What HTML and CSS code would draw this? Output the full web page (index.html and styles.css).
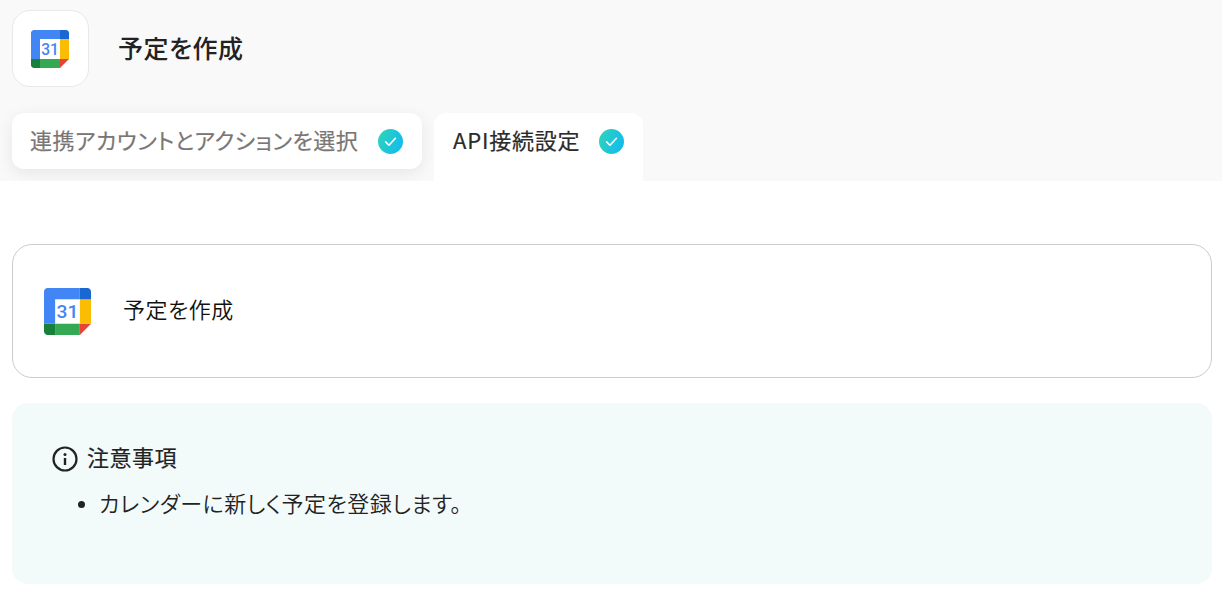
FILE: index.html
```html
<!DOCTYPE html>
<html lang="ja">
<head>
<meta charset="utf-8">
<title>予定を作成</title>
<link rel="stylesheet" href="styles.css">
</head>
<body>
<svg class="defs" width="0" height="0" aria-hidden="true">
  <defs>
    <linearGradient id="check-grad" x1="0" y1="0.3" x2="1" y2="0.7">
      <stop offset="0" stop-color="#2dd3bb"/>
      <stop offset="1" stop-color="#12bbf0"/>
    </linearGradient>
    <symbol id="gcal" viewBox="0 0 200 200">
      <path fill="#fff" d="M152.637 47.363H47.363v105.274h105.274z"/>
      <path fill="#EA4335" d="M152.637 200L200 152.637h-47.363z"/>
      <path fill="#FBBC04" d="M200 47.363h-47.363v105.273H200z"/>
      <path fill="#34A853" d="M152.637 152.637H47.363V200h105.273z"/>
      <path fill="#188038" d="M0 152.637v31.576C0 192.936 7.064 200 15.788 200h31.576v-47.363z"/>
      <path fill="#1967D2" d="M200 47.363V15.788C200 7.064 192.936 0 184.212 0h-31.576v47.363z"/>
      <path fill="#4285F4" d="M152.637 0H15.788C7.064 0 0 7.064 0 15.788v136.849h47.363V47.363h105.273z"/>
      <text x="100" y="129" text-anchor="middle" class="gcal-num">31</text>
    </symbol>
    <symbol id="check" viewBox="0 0 25 25">
      <circle cx="12.5" cy="12.5" r="12.5" fill="url(#check-grad)"/>
      <path d="M7.6 12.9l3.4 3.3 6.4-6.9" fill="none" stroke="#fff" stroke-width="1.6" stroke-linecap="round" stroke-linejoin="round"/>
    </symbol>
  </defs>
</svg>

<header class="top">
  <div class="title-row">
    <div class="app-box"><svg class="gcal-small"><use href="#gcal"/></svg></div>
    <h1 class="title">予定を作成</h1>
  </div>
  <nav class="tabs">
    <div class="tab tab-done">
      <span class="tab-label">連携アカウントとアクションを選択</span>
      <svg class="check"><use href="#check"/></svg>
    </div>
    <div class="tab tab-active">
      <span class="tab-label">API接続設定</span>
      <svg class="check"><use href="#check"/></svg>
    </div>
  </nav>
</header>

<main class="content">
  <section class="action-card">
    <svg class="gcal-large"><use href="#gcal"/></svg>
    <span class="action-name">予定を作成</span>
  </section>
  <section class="notice">
    <div class="notice-head">
      <svg class="info" viewBox="0 0 26 26" aria-hidden="true">
        <circle cx="13" cy="13" r="11.5" fill="none" stroke="#222" stroke-width="2.2"/>
        <circle cx="13" cy="8.4" r="1.5" fill="#222"/>
        <path d="M13 12v7" stroke="#222" stroke-width="2.4"/>
      </svg>
      <span class="notice-title">注意事項</span>
    </div>
    <ul class="notice-list">
      <li>カレンダーに新しく予定を登録します。</li>
    </ul>
  </section>
</main>
</body>
</html>
```

FILE: styles.css
```css
* {
  box-sizing: border-box;
}

html, body {
  margin: 0;
  padding: 0;
  background: #fff;
}

body {
  font-family: "Noto Sans CJK JP", "Noto Sans", sans-serif;
  font-feature-settings: "palt";
  letter-spacing: 0.5px;
  color: #222;
  overflow: hidden;
}

.defs {
  display: block;
  height: 0;
}

.gcal-num {
  font-family: Roboto, sans-serif;
  font-size: 82px;
  font-weight: 500;
  letter-spacing: 0;
  fill: #4285F4;
}

.top {
  background: #f9f9f9;
  height: 181px;
  padding: 10px 12px 0;
  overflow: hidden;
}

.title-row {
  display: flex;
  align-items: center;
  gap: 29px;
}

.app-box {
  width: 77px;
  height: 77px;
  background: #fff;
  border: 1px solid #e8e8e8;
  border-radius: 18px;
  display: flex;
  align-items: center;
  justify-content: center;
}

.gcal-small {
  width: 38px;
  height: 38px;
  margin-right: 2px;
}

.title {
  margin: 0 0 3px;
  font-size: 25px;
  font-weight: 500;
  line-height: 1.4;
  color: #222;
}

.tabs {
  display: flex;
  align-items: flex-start;
  gap: 12px;
  margin-top: 26px;
}

.tab {
  display: flex;
  align-items: center;
  justify-content: space-between;
  height: 56px;
  padding: 0 19px 0 18px;
  background: #fff;
  border-radius: 12px;
}

.tab-label {
  font-size: 22px;
  font-weight: 400;
  -webkit-text-stroke: 0.2px currentColor;
  line-height: 1;
  margin-bottom: 5px;
}

.tab-done {
  width: 410px;
  color: #7a7674;
  box-shadow: 0 4px 16px rgba(0, 0, 0, 0.08);
}

.tab-active {
  width: 209px;
  height: 68px;
  padding: 0 19px 12px 19px;
  border-radius: 12px 12px 0 0;
  color: #2b2b2b;
  letter-spacing: 0.8px;
}

.check {
  width: 25px;
  height: 25px;
  flex: none;
}

.content {
  padding: 63px 10px 0 12px;
}

.action-card {
  display: flex;
  align-items: center;
  gap: 32px;
  height: 134px;
  padding-left: 31px;
  border: 1px solid #cccccc;
  border-radius: 20px;
}

.gcal-large {
  width: 47px;
  height: 47px;
  flex: none;
}

.action-name {
  font-size: 22px;
  font-weight: 350;
  color: #111;
  margin-bottom: 7px;
}

.notice {
  height: 181px;
  margin-top: 25px;
  padding: 37px 40px 0;
  background: #f2fafa;
  border-radius: 16px;
}

.notice-head {
  display: flex;
  align-items: center;
  gap: 9px;
}

.info {
  width: 26px;
  height: 26px;
  flex: none;
  margin-top: 6px;
}

.notice-title {
  font-size: 22px;
  font-weight: 400;
  -webkit-text-stroke: 0.2px currentColor;
  line-height: 30px;
}

.notice-list {
  margin: 15px 0 0;
  padding-left: 47px;
  font-size: 22px;
  font-weight: 350;
  line-height: 30px;
}

.notice-list li::marker {
  font-size: 18px;
}
```
